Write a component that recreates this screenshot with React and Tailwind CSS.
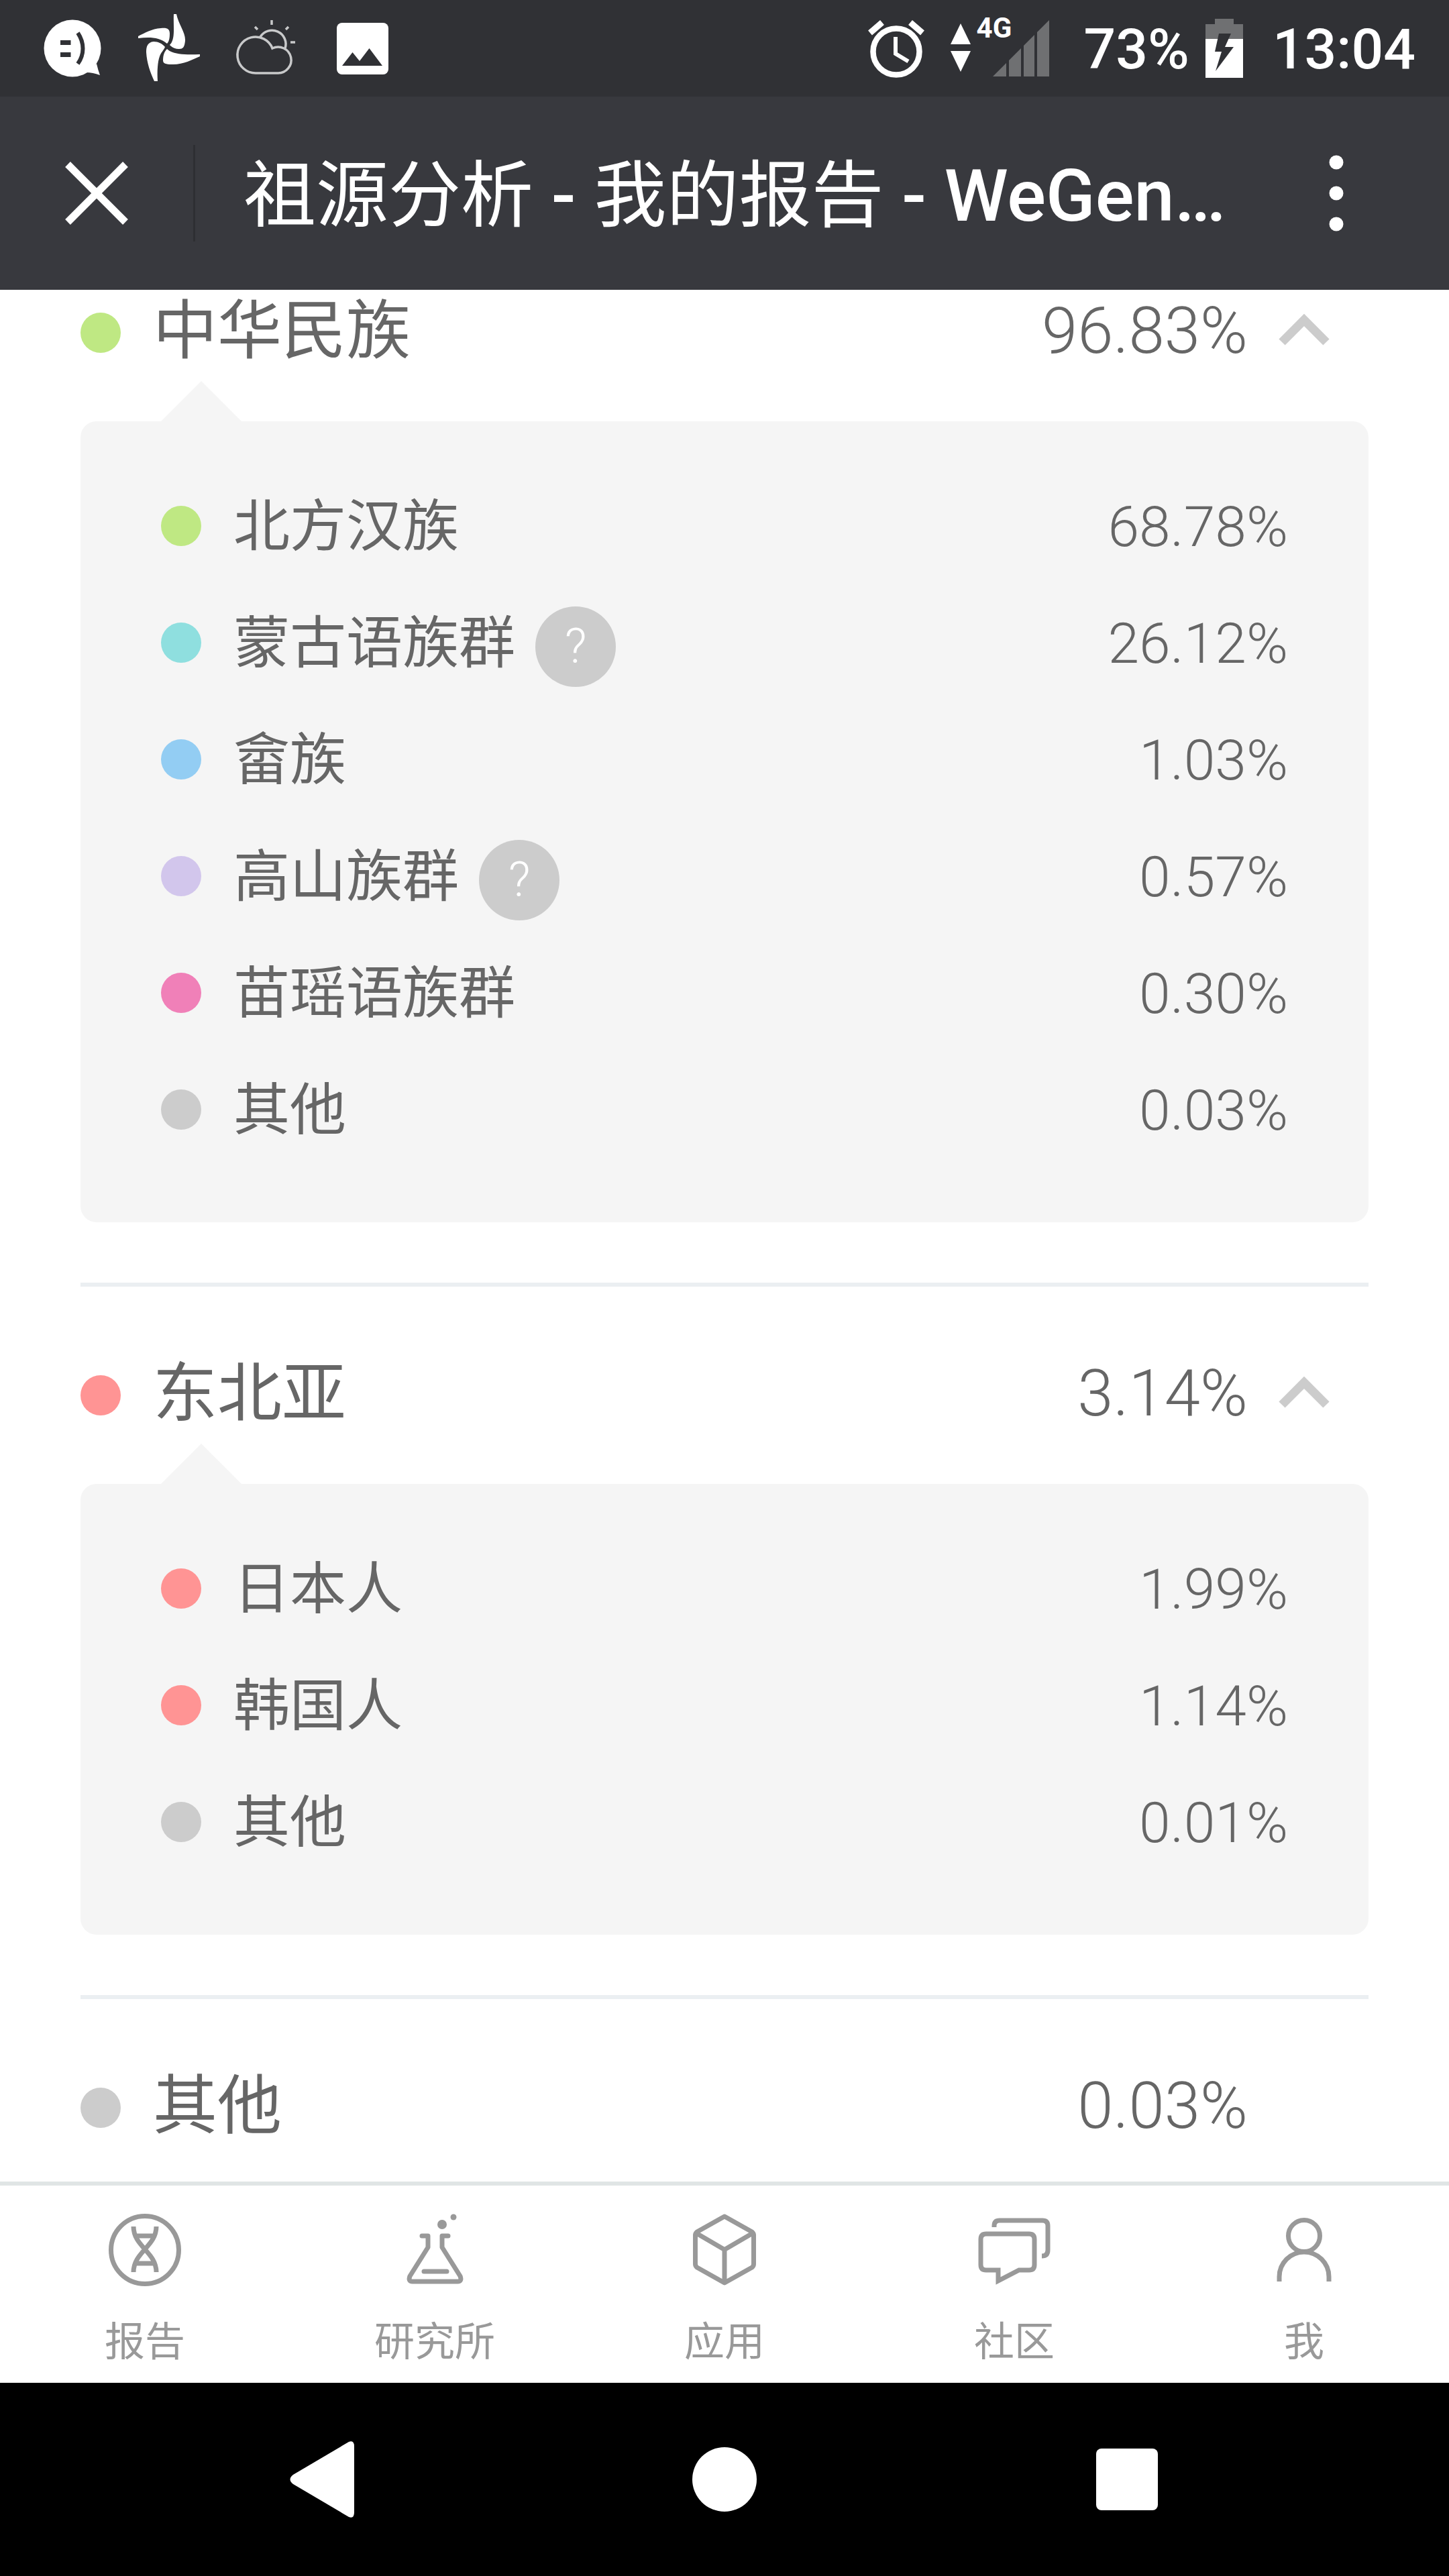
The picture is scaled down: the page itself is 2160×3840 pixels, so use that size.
import { useState } from "react";

const regions = [
  {
    name: "中华民族",
    percent: "96.83%",
    color: "bg-[#bfe883]",
    groups: [
      { name: "北方汉族", percent: "68.78%", color: "bg-[#bfe883]" },
      { name: "蒙古语族群", percent: "26.12%", color: "bg-[#8fdfdf]", help: true },
      { name: "畲族", percent: "1.03%", color: "bg-[#93cdf3]" },
      { name: "高山族群", percent: "0.57%", color: "bg-[#d2c6ec]", help: true },
      { name: "苗瑶语族群", percent: "0.30%", color: "bg-[#f080b8]" },
      { name: "其他", percent: "0.03%", color: "bg-[#cccccc]" },
    ],
  },
  {
    name: "东北亚",
    percent: "3.14%",
    color: "bg-[#ff9494]",
    groups: [
      { name: "日本人", percent: "1.99%", color: "bg-[#ff9494]" },
      { name: "韩国人", percent: "1.14%", color: "bg-[#ff9494]" },
      { name: "其他", percent: "0.01%", color: "bg-[#cccccc]" },
    ],
  },
  { name: "其他", percent: "0.03%", color: "bg-[#cccccc]", groups: [] },
];

const tabs = [
  {
    label: "报告",
    icon: (
      <>
        <circle cx="60" cy="60" r="50.5" />
        <path d="M43 25C43 55 77 63 77 93M77 25C77 55 43 63 43 93M47 39H73M47 80H73" />
      </>
    ),
  },
  {
    label: "研究所",
    icon: (
      <>
        <path
          d="M41 39H50V56L23 99Q20 107 27 107H94Q101 107 98 99L71 56V39H80M44 92H78"
          strokeLinecap="round"
          strokeLinejoin="round"
        />
        <circle cx="71" cy="22" r="7" fill="currentColor" stroke="none" />
        <circle cx="88" cy="11" r="4.5" fill="currentColor" stroke="none" />
      </>
    ),
  },
  {
    label: "应用",
    icon: (
      <path
        d="M60 10L19 33Q16.500 35 16.500 38V81Q16.500 84 19 86L60 109L101 86Q103.500 84 103.500 81V38Q103.500 35 101 33ZM18 35L60 59.500L102 35M60 59.500V109"
        strokeLinejoin="round"
      />
    ),
  },
  {
    label: "社区",
    icon: (
      <>
        <path d="M18 36H82Q90 36 90 44V82Q90 90 82 90H67L36 106V90H18Q10 90 10 82V44Q10 36 18 36Z" />
        <path d="M30 26V24Q30 16 38 16H102Q110 16 110 24V60Q110 69 101 69" />
      </>
    ),
  },
  {
    label: "我",
    icon: (
      <>
        <circle cx="60" cy="39" r="23.5" />
        <path d="M23 107V100A37 37 0 0 1 97 100V107" />
      </>
    ),
  },
];

function StatusBar() {
  return (
    <div className="h-36 bg-[#303135] text-white flex items-center justify-between pl-[60px] pr-[50px]">
      <div className="flex items-center gap-12">
        <svg viewBox="0 0 96 96" className="size-24">
          <circle cx="48" cy="48" r="42.5" fill="#fff" />
          <path d="M84 71Q86 80 89 88Q78 84 69 84Z" fill="#fff" />
          <path d="M30 36H45.500V43H30ZM30 54H45.500V61H30Z" fill="#303135" />
          <path d="M56 25C66 40 66 57 56 71" stroke="#303135" strokeWidth="6" fill="none" />
        </svg>
        <svg viewBox="0 0 96 96" className="size-24 overflow-visible" fill="#fff">
          <path d="M55 -3H59C62 12 73 25 72 37C71 46 69 49 63 49C57 49 53 47 49 43C58 34 54 15 55 -3Z" />
          <path d="M2 33V30C12 25 22 19 36 18C45 17 49 19 49 26C49 33 48 38 45 41C34 31 18 31 2 33Z" />
          <path d="M26 97H31C30 82 31 68 34 60C36 54 40 51 42 46C38 41 32 38 25 38C16 39 14 45 14 54C15 70 20 84 26 97Z" />
          <path d="M94 57V60C82 65 70 72 54 72C44 72 39 71 39 66C39 58 41 53 45 49C53 57 70 58 94 57Z" />
        </svg>
        <svg
          viewBox="0 0 96 96"
          className="size-24"
          fill="none"
          stroke="#c8c9ca"
          strokeWidth="3.5"
        >
          <path d="M33 85A27 27 0 1 1 58 48A19.500 19.500 0 1 1 66 85Z" />
          <path d="M40 31A20.500 20.500 0 0 1 77 48M57 6V13M32 16L36 20M82 16L78 20M85 39H92" />
        </svg>
        <svg viewBox="0 0 96 96" className="size-24">
          <rect x="10" y="10" width="77" height="77" rx="8" fill="#fff" />
          <path d="M18 74L33.500 54L44 67L58.500 48L78 74Z" fill="#303135" />
        </svg>
      </div>

      <div className="flex items-center">
        <svg viewBox="0 0 96 96" className="size-24" fill="none" stroke="#fff">
          <circle cx="48" cy="53" r="34.5" strokeWidth="8.5" />
          <path d="M9 25L27 9.500M69 9.500L87 25" strokeWidth="9" />
          <path d="M47 31V56L66 67.500" strokeWidth="6" />
        </svg>
        <svg viewBox="0 0 32 96" className="w-8 h-24 ml-8" fill="#fff">
          <path d="M16 11L31 42H1ZM1 52H31L16 83Z" />
        </svg>
        <div className="relative ml-2 w-[108px] h-24 flex justify-end">
          <span className="absolute left-0 -top-1.5 text-[42px] leading-[48px] font-bold">
            4G
          </span>
          <svg viewBox="0 0 84 96" className="w-[84px] h-24" fill="#6f7072">
            <path d="M0 90L20 70V90ZM24 66L42 48V90H24ZM46 44L62 28V90H46ZM66 24L84 6V90H66Z" />
          </svg>
        </div>
        <span className="ml-[52px] pt-1 text-[84px] leading-24 font-medium">73%</span>
        <svg viewBox="0 0 56 96" className="w-14 h-24 ml-6">
          <path d="M14 4H42V12H56V34H0V12H14Z" fill="#6f7072" />
          <path d="M0 34H56V92H0Z" fill="#fff" />
          <path d="M20 26H38L29 46H42L15 82L24 53H14Z" fill="#303135" />
        </svg>
        <span className="ml-11 pt-1 text-[84px] leading-24 font-medium">13:04</span>
      </div>
    </div>
  );
}

function TitleBar() {
  return (
    <header className="h-72 bg-[#38393e] text-white flex items-center">
      <button aria-label="关闭" className="w-72 shrink-0 flex justify-center">
        <svg viewBox="0 0 96 96" className="size-24" stroke="#fff" strokeWidth="11">
          <path d="M5 5L91 91M91 5L5 91" />
        </svg>
      </button>
      <div className="w-[3px] h-36 bg-[#2e2f33]" />
      <h1 className="flex-1 min-w-0 truncate pl-[72px] pt-2 text-[108px] leading-36 font-medium">
        <span className="font-normal">祖源分析</span> -{" "}
        <span className="font-normal">我的报告</span> - WeGen…
      </h1>
      <button aria-label="更多" className="mr-[120px] w-24 shrink-0 flex justify-center">
        <svg viewBox="0 0 24 120" className="w-6 h-[120px]" fill="#fff">
          <circle cx="12" cy="14" r="10.5" />
          <circle cx="12" cy="60" r="10.5" />
          <circle cx="12" cy="106" r="10.5" />
        </svg>
      </button>
    </header>
  );
}

function Group({ group }) {
  return (
    <li className="h-[174px] flex items-center">
      <span className={`size-[60px] rounded-full ${group.color}`} />
      <span className="ml-12 pt-1 text-[84px] leading-[120px]">{group.name}</span>
      {group.help && (
        <button
          aria-label={`${group.name}说明`}
          className="ml-[30px] mt-3 size-[120px] rounded-full bg-[#cccccc] text-white text-[72px] leading-[120px] font-light"
        >
          ?
        </button>
      )}
      <span className="ml-auto pt-1 text-[84px] leading-[120px] font-light">
        {group.percent}
      </span>
    </li>
  );
}

function Region({ region }) {
  const [open, setOpen] = useState(true);
  const hasGroups = region.groups.length > 0;

  return (
    <section className="border-b-[6px] border-[#ebeff2] last:border-b-0 pt-[102px] first:pt-1 pb-[90px] last:pb-14">
      <div className="h-[114px] flex items-center">
        <span className={`mt-1.5 size-[60px] rounded-full ${region.color}`} />
        <h2 className="ml-12 text-[96px] leading-[114px]">{region.name}</h2>
        <span className="ml-auto text-[96px] leading-[114px] font-light">
          {region.percent}
        </span>
        <div className="w-[168px] mr-3 flex justify-center">
          {hasGroups && (
            <button aria-label={region.name} onClick={() => setOpen(!open)}>
              <svg
                viewBox="0 0 76 60"
                className={open ? "w-[76px] h-[60px]" : "w-[76px] h-[60px] rotate-180"}
                fill="none"
                stroke="#cccccc"
                strokeWidth="13"
              >
                <path d="M5 47L38 14L71 47" />
              </svg>
            </button>
          )}
        </div>
      </div>

      {hasGroups && open && (
        <div className="relative mt-[78px] rounded-3xl bg-[#f5f5f5] px-[120px] pt-[69px] pb-[81px]">
          <svg
            viewBox="0 0 120 60"
            className="absolute left-[120px] -top-[60px] w-[120px] h-[60px]"
            fill="#f5f5f5"
          >
            <path d="M0 60L60 0L120 60Z" />
          </svg>
          <ul>
            {region.groups.map((group) => (
              <Group key={group.name} group={group} />
            ))}
          </ul>
        </div>
      )}
    </section>
  );
}

function TabBar() {
  return (
    <nav className="border-t-[6px] border-[#e0e5e5] bg-white text-[#999999] flex">
      {tabs.map((tab) => (
        <a key={tab.label} href="#" className="flex-1 flex flex-col items-center pt-9 pb-7">
          <svg
            viewBox="0 0 120 120"
            className="size-[120px]"
            fill="none"
            stroke="currentColor"
            strokeWidth="7"
          >
            {tab.icon}
          </svg>
          <span className="mt-[46px] text-[60px] leading-16">{tab.label}</span>
        </a>
      ))}
    </nav>
  );
}

function SystemNav() {
  return (
    <div className="h-72 bg-black px-[180px] flex items-center">
      <button aria-label="返回" className="flex-1 flex justify-center">
        <svg viewBox="0 0 96 114" className="w-24 h-[114px]" fill="#fff">
          <path d="M88 1Q96 -2 96 8V106Q96 116 88 113L5 64Q-4 57 5 50Z" />
        </svg>
      </button>
      <button aria-label="主页" className="flex-1 flex justify-center">
        <span className="size-24 rounded-full bg-white" />
      </button>
      <button aria-label="最近" className="flex-1 flex justify-center">
        <span className="size-[92px] rounded-lg bg-white" />
      </button>
    </div>
  );
}

export default function App() {
  return (
    <div
      lang="zh-CN"
      className="min-h-screen flex flex-col bg-white font-[Roboto,'Noto_Sans_CJK_SC',sans-serif]"
    >
      <StatusBar />
      <TitleBar />
      <main className="flex-1 px-[120px] text-[#666666]">
        {regions.map((region) => (
          <Region key={region.name} region={region} />
        ))}
      </main>
      <TabBar />
      <SystemNav />
    </div>
  );
}
